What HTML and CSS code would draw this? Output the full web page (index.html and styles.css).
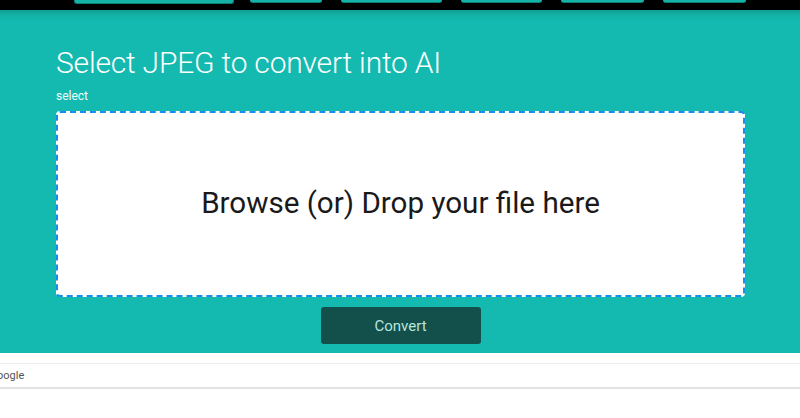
FILE: index.html
```html
<!DOCTYPE html>
<html>
<head>
<meta charset="utf-8">
<link rel="stylesheet" href="styles.css">
</head>
<body>
<div class="topbar">
  <div class="tabs">
    <span class="tab tab-main"></span>
    <span class="tab t2"></span>
    <span class="tab t3"></span>
    <span class="tab t4"></span>
    <span class="tab t5"></span>
    <span class="tab t6"></span>
  </div>
</div>
<section class="hero">
  <h1 class="title">Select JPEG to convert into AI</h1>
  <div class="label">select</div>
  <div class="drop">Browse (or) Drop your file here</div>
  <div class="actions"><button class="convert">Convert</button></div>
</section>
<div class="footer">
  <div class="gap"></div>
  <div class="gbar"><span class="gtext">oogle</span></div>
</div>
</body>
</html>
```
FILE: styles.css
```css
* { box-sizing: border-box; }
html, body { margin: 0; padding: 0; background: #fff; }
body { font-family: Roboto, "Noto Sans", sans-serif; width: 800px; height: 418px; overflow: hidden; }
.topbar { height: 10px; background: #000; position: relative; }
.tabs { display: flex; padding-left: 74px; align-items: flex-start; }
.tab { display: block; height: 3px; background: #14b2a7; border-bottom: 1px solid #0c7f76; border-radius: 0 0 3px 3px; margin-right: 19px; }
.tab-main { width: 160px; height: 4px; margin-right: 16px; border: 1px solid #0c7f76; border-top: 0; }
.t2 { width: 72px; }
.t3 { width: 101px; }
.t4 { width: 81px; }
.t5 { width: 83px; }
.t6 { width: 83px; }
.hero {
  height: 343px;
  background: linear-gradient(#0f9f94 0px, #13b3a8 6px, #14bab0 12px, #14bab0 100%);
  padding: 35px 55px 0 56px;
}
.title { margin: 0; font-weight: 300; font-size: 30px; line-height: 36px; color: #fff; letter-spacing: -0.2px; }
.label { font-size: 12px; color: #f2fbfa; margin-top: 8px; line-height: 14px; font-weight: 400; }
.drop {
  margin-top: 8px;
  height: 186px;
  background: #fff;
  border: 2px dashed #1a8cf0;
  border-radius: 4px;
  display: flex; align-items: center; justify-content: center;
  font-size: 29.6px; color: #1a1a1a; padding-bottom: 2px;
}
.actions { display: flex; justify-content: center; margin-top: 10px; }
.convert {
  width: 160px; height: 37px; border: 0; border-radius: 3px;
  background: #134f4b; color: #b7e6df; font-family: Roboto, sans-serif; font-size: 15px;
}
.gap { height: 11px; border-bottom: 1px solid #ececec; }
.gbar { height: 25px; border-bottom: 2px solid #e2e2e2; display: flex; align-items: center; }
.gtext { font-size: 11px; color: #555; margin-left: -3px; }
```
